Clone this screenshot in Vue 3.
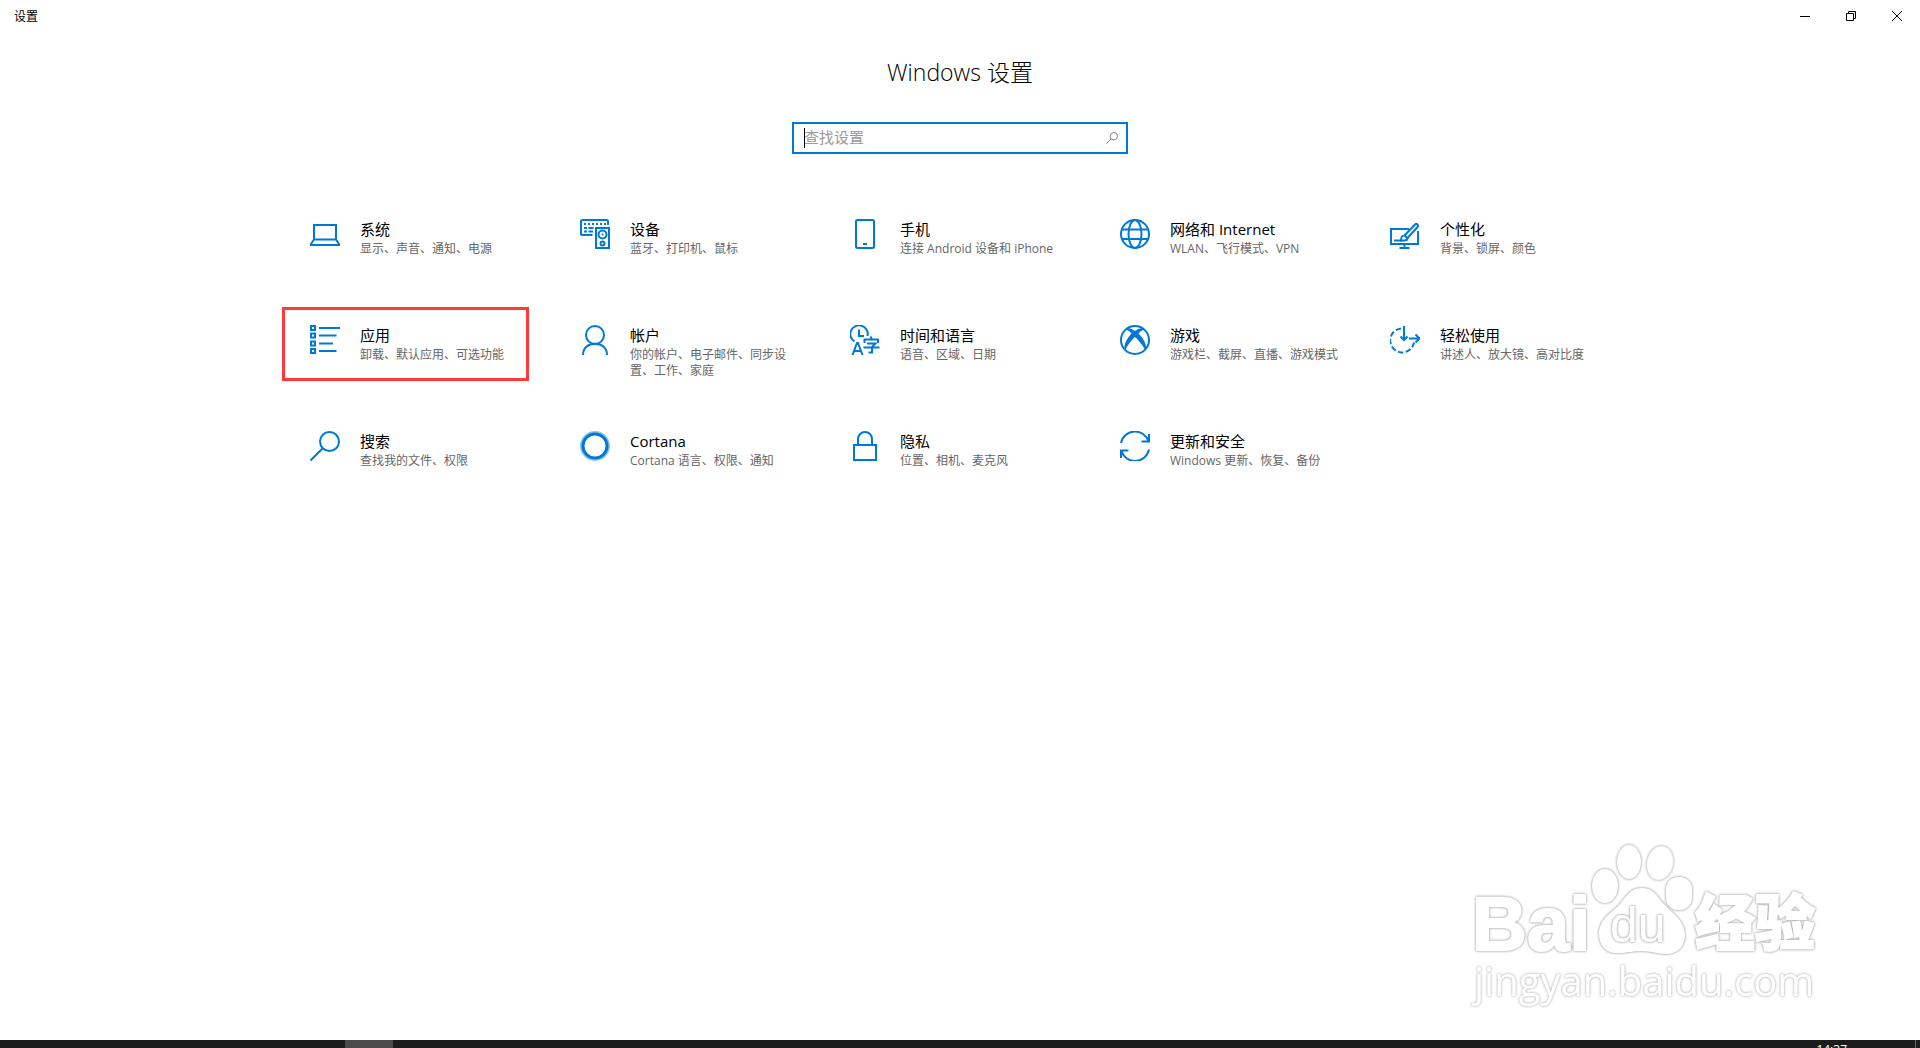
<script setup>
import { ref } from 'vue';

const query = ref('');

const categories = [
  { id: 'system', title: '系统', desc: '显示、声音、通知、电源' },
  { id: 'devices', title: '设备', desc: '蓝牙、打印机、鼠标' },
  { id: 'phone', title: '手机', desc: '连接 Android 设备和 iPhone' },
  { id: 'network', title: '网络和 Internet', desc: 'WLAN、飞行模式、VPN' },
  { id: 'personal', title: '个性化', desc: '背景、锁屏、颜色' },
  { id: 'apps', title: '应用', desc: '卸载、默认应用、可选功能', marked: true },
  { id: 'accounts', title: '帐户', desc: '你的帐户、电子邮件、同步设置、工作、家庭' },
  { id: 'time', title: '时间和语言', desc: '语音、区域、日期' },
  { id: 'gaming', title: '游戏', desc: '游戏栏、截屏、直播、游戏模式' },
  { id: 'ease', title: '轻松使用', desc: '讲述人、放大镜、高对比度' },
  { id: 'search', title: '搜索', desc: '查找我的文件、权限' },
  { id: 'cortana', title: 'Cortana', desc: 'Cortana 语言、权限、通知' },
  { id: 'privacy', title: '隐私', desc: '位置、相机、麦克风' },
  { id: 'update', title: '更新和安全', desc: 'Windows 更新、恢复、备份' }
];
</script>

<template>
  <div class="window">
    <header class="titlebar">
      <span class="app-name">设置</span>
      <div class="controls">
        <button type="button" aria-label="最小化">
          <svg width="10" height="10" viewBox="0 0 10 10"><path d="M0 5.5h10" /></svg>
        </button>
        <button type="button" aria-label="向下还原">
          <svg width="10" height="10" viewBox="0 0 10 10"><path d="M.5 2.5h7v7h-7zM2.5 2.5v-2h7v7h-2" /></svg>
        </button>
        <button type="button" aria-label="关闭">
          <svg width="10" height="10" viewBox="0 0 10 10"><path d="M0 0l10 10M10 0L0 10" /></svg>
        </button>
      </div>
    </header>

    <main>
      <h1>Windows 设置</h1>

      <label class="search">
        <span class="caret"></span>
        <input v-model="query" type="text" placeholder="查找设置" aria-label="查找设置" />
        <svg width="12" height="12" viewBox="0 0 12 12"><circle cx="7.8" cy="4.2" r="3.7" /><path d="M5.2 6.8L.4 11.6" /></svg>
      </label>

      <nav class="grid">
        <a v-for="item in categories" :key="item.id" href="#" class="tile" :class="{ marked: item.marked }">
          <svg class="icon" width="30" height="30" viewBox="0 0 30 30">
            <g v-if="item.id === 'system'">
              <path d="M4 6h22v14.500H4zM4 20.500L1 25v1h28v-1l-3-4.500" />
            </g>
            <g v-else-if="item.id === 'devices'">
              <path d="M12.500 16H2.500a1.500 1.500 0 0 1-1.500-1.500v-12A1.500 1.500 0 0 1 2.500 1h24A1.500 1.500 0 0 1 28 2.500V6" />
              <path d="M4 5h22" stroke-dasharray="2 2" />
              <path d="M4 9h3M8.500 9h5M4 12.500h3M8.500 12.500h4.500" />
              <path d="M16 9h13v20H16z" />
              <circle cx="22.500" cy="15.500" r="4" />
              <circle cx="22.500" cy="24.500" r="2" />
              <circle class="solid" cx="22.500" cy="15.500" r="1" />
            </g>
            <g v-else-if="item.id === 'phone'">
              <rect x="6" y="1" width="18" height="28" rx="1.500" />
              <path d="M13 25h4" />
            </g>
            <g v-else-if="item.id === 'network'">
              <circle cx="15" cy="15" r="14" />
              <ellipse cx="15" cy="15" rx="6.500" ry="14" />
              <path d="M2 10.500h26M2 20h26" />
            </g>
            <g v-else-if="item.id === 'personal'">
              <path d="M19 10H1v15h27V12M14.500 25v4M9.500 29h10" />
              <path d="M4 21.500h8" />
              <path d="M14.500 16.500L25 5.500c1.500-1.500 4 .5 2.500 2.500L17.500 19M14.500 16.500l3 2.500" />
              <path d="M14.500 16.500c-3 0-3.500 1.500-3.500 5h3.500c2.500 0 3-1 3-2.500" />
            </g>
            <g v-else-if="item.id === 'apps'">
              <path d="M1 1h4v4H1zM1 8.500h4v4H1zM1 16.500h4v4H1zM1 24h4v4H1z" />
              <path d="M9 3h21M9 10.500h17.500M9 18.500h14M9 26h17.500" />
            </g>
            <g v-else-if="item.id === 'accounts'">
              <circle cx="15" cy="10" r="9" />
              <path d="M3 30C3 23 8 18.800 15 18.800S27 23 27 30" />
            </g>
            <g v-else-if="item.id === 'time'">
              <path d="M4.500 16.500A8.700 8.700 0 1 1 17.500 11" />
              <path d="M9 4.500v6.500h5" />
              <path d="M2.500 30L7 18h1l4.500 12M4 26h7" />
              <path d="M20.500 11.500l1.500 3M14.500 18v-3.500h13.500V18M17 18.500h8.500L22 22M13.500 22.500h16M22 22v5.500h-3.500" />
            </g>
            <g v-else-if="item.id === 'gaming'">
              <circle cx="15" cy="15" r="14" />
              <path class="solid" d="M6.500 3.500c3-1 5.500.5 8.500 2.500 3-2 5.500-3.500 8.500-2.500l1 1.500c-2-.5-4 1-6 3.500 4 4 8 9.500 7.500 15l-1 1.500C22.500 20 19 15.500 15 12 11 15.500 7.500 20 5.500 25l-1-1.500C4 18 8 12.500 11.500 8.500c-2-2.500-4-4-6-3.500z" />
            </g>
            <g v-else-if="item.id === 'ease'">
              <path d="M11 3.500A12 12 0 1 0 24 17.500" stroke-dasharray="5.500 2.500" />
              <path d="M14 1v13M10.500 11.500L14 15l3.500-3.500M19 13.500h10M25.500 9.500l4 4-4 4" />
            </g>
            <g v-else-if="item.id === 'search'">
              <circle cx="19.500" cy="10.500" r="9.500" />
              <path d="M12.500 17.500L.5 29.500" />
            </g>
            <g v-else-if="item.id === 'cortana'">
              <circle cx="15" cy="15" r="13.500" class="halo" />
              <circle cx="15" cy="15" r="12" class="ring" />
            </g>
            <g v-else-if="item.id === 'privacy'">
              <path d="M4 14h22v15H4zM8 14V8a7 7 0 0 1 14 0v6" />
            </g>
            <g v-else>
              <path d="M1 12A14.200 14.200 0 0 1 28.500 10.500M29 3v7.500h-7.500" />
              <path d="M29 18.500A14.200 14.200 0 0 1 1.500 20M1 27v-7.500h7.500" />
            </g>
          </svg>
          <span class="text">
            <span class="name">{{ item.title }}</span>
            <span class="desc">{{ item.desc }}</span>
          </span>
        </a>
      </nav>
    </main>

    <!-- Marca de agua -->
    <svg class="watermark" width="380" height="180" viewBox="0 0 380 180">
      <text class="latin" x="12" y="115" font-size="76">Bai</text>
      <ellipse cx="145" cy="51" rx="13" ry="17" />
      <ellipse cx="169" cy="27" rx="12" ry="17" />
      <ellipse cx="200" cy="28" rx="13" ry="17" transform="rotate(12 200 28)" />
      <rect x="206" y="42" width="26" height="33" rx="12" />
      <path d="M182 53c-13 0-17 11-24 18-8 8-19 14-19 28 0 12 8 20 19 19 9 0 15-2 24-2s16 3 24 3c12 0 19-8 19-19 0-14-12-21-19-29-8-7-11-18-24-18z" />
      <text class="du" x="150" y="107" font-size="50">du</text>
      <text class="cjk" x="235" y="110" font-size="60">经验</text>
      <text class="url" x="14" y="161" font-size="40">jingyan.baidu.com</text>
    </svg>

    <footer class="taskbar">
      <span class="active-task"></span>
      <time>14:37</time>
      <span class="peek"></span>
    </footer>
  </div>
</template>

<style>
body {
  margin: 0;
  background: #fff;
}
</style>

<style scoped>
.window {
  position: relative;
  display: flex;
  flex-direction: column;
  min-height: 100vh;
  overflow: hidden;
  background: #fff;
  color: #000;
  font-family: "Open Sans", "Noto Sans CJK SC", sans-serif;
}

.titlebar {
  display: flex;
  justify-content: space-between;
  height: 32px;
}

.app-name {
  padding-left: 14px;
  font-size: 12px;
  line-height: 34px;
}

.controls {
  display: flex;
}

.controls button {
  display: flex;
  align-items: center;
  justify-content: center;
  width: 46px;
  padding: 0;
  border: none;
  background: none;
}

.controls svg {
  fill: none;
  stroke: #000;
}

main {
  flex: 1;
  display: flex;
  flex-direction: column;
  align-items: center;
}

h1 {
  margin: 24px 0 0;
  font-size: 23px;
  font-weight: 300;
  line-height: 32px;
}

.search {
  position: relative;
  display: flex;
  align-items: center;
  box-sizing: border-box;
  width: 336px;
  height: 32px;
  margin-top: 34px;
  padding: 0 8px 0 10px;
  border: 2px solid #0078d7;
}

.search input {
  flex: 1;
  min-width: 0;
  padding: 0 0 2px;
  border: none;
  outline: none;
  background: none;
  font-family: inherit;
  font-size: 15px;
  line-height: 20px;
}

.search input::placeholder {
  color: #999;
  opacity: 1;
}

.search svg {
  fill: none;
  stroke: #888;
}

.caret {
  position: absolute;
  left: 10px;
  width: 1px;
  height: 20px;
  background: #000;
}

.grid {
  display: grid;
  grid-template-columns: repeat(auto-fill, 270px);
  grid-auto-rows: 106px;
  justify-content: center;
  width: 100%;
  max-width: 1350px;
  margin-top: 65px;
}

.tile {
  position: relative;
  display: flex;
  align-items: flex-start;
  gap: 20px;
  padding: 0 20px 0 25px;
  color: inherit;
  text-decoration: none;
}

/* Recuadro rojo sobre la categoría señalada */
.marked::after {
  content: "";
  position: absolute;
  top: -18px;
  left: -3px;
  box-sizing: border-box;
  width: 247px;
  height: 74px;
  border: 3px solid #ff3a3a;
}

.icon {
  flex: none;
  fill: none;
  stroke: #0078d7;
  stroke-width: 2;
}

.icon .solid {
  fill: #0078d7;
  stroke: none;
}

.icon .halo {
  stroke: #8fc4ef;
  stroke-width: 3;
}

.icon .ring {
  stroke-width: 3;
}

.text {
  flex: 1;
  display: flex;
  flex-direction: column;
  gap: 2px;
}

.name {
  font-size: 15px;
  line-height: 20px;
}

.desc {
  font-size: 12px;
  line-height: 16px;
  color: #666;
}

.watermark {
  position: absolute;
  right: 80px;
  bottom: 33px;
  fill: #fff;
  pointer-events: none;
}

/* Relleno blanco con un contorno gris difuso */
.watermark > * {
  filter: drop-shadow(0 0 1px #aaa) drop-shadow(0 0 1px #ccc);
}

.watermark text {
  font-family: "Liberation Sans", sans-serif;
}

.watermark .latin {
  font-weight: 700;
  stroke: #fff;
  stroke-width: 2;
}

.watermark .cjk {
  font-family: "Noto Sans CJK SC", sans-serif;
  font-weight: 900;
  stroke: #fff;
  stroke-width: 2;
}

.watermark .url {
  font-family: "Open Sans", sans-serif;
  filter: drop-shadow(0 0 1px #bbb) drop-shadow(0 0 1px #ddd);
}

.taskbar {
  display: flex;
  height: 8px;
  padding: 0 4px 0 345px;
  overflow: hidden;
  background: #1c1c1c;
}

.active-task {
  width: 48px;
  margin-right: auto;
  background: #4c4c4c;
}

time {
  padding-top: 3px;
  font-size: 12px;
  line-height: 14px;
  color: #fff;
}

.peek {
  width: 1px;
  margin-left: 68px;
  background: #666;
}
</style>
